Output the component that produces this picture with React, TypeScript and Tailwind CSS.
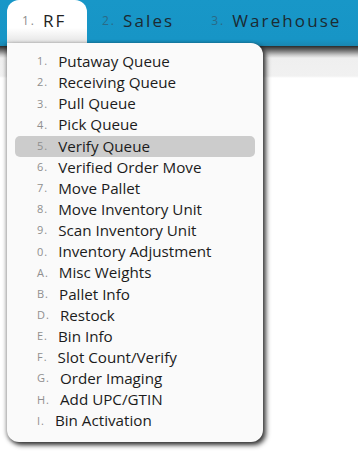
import React from "react";

const items: [string, string][] = [
  ["1.", "Putaway Queue"],
  ["2.", "Receiving Queue"],
  ["3.", "Pull Queue"],
  ["4.", "Pick Queue"],
  ["5.", "Verify Queue"],
  ["6.", "Verified Order Move"],
  ["7.", "Move Pallet"],
  ["8.", "Move Inventory Unit"],
  ["9.", "Scan Inventory Unit"],
  ["0.", "Inventory Adjustment"],
  ["A.", "Misc Weights"],
  ["B.", "Pallet Info"],
  ["D.", "Restock"],
  ["E.", "Bin Info"],
  ["F.", "Slot Count/Verify"],
  ["G.", "Order Imaging"],
  ["H.", "Add UPC/GTIN"],
  ["I.", "Bin Activation"],
];

export default function App() {
  return (
    <div
      className="relative w-[358px] h-[457px] bg-white overflow-hidden"
      style={{ fontFamily: '"Open Sans", "Liberation Sans", Arial, sans-serif' }}
    >
      <div className="flex h-[46px] bg-[linear-gradient(to_bottom,#1897c8_0%,#1795c6_85%,#1a86b0_100%)] pl-[7px]">
        <div className="flex h-[43px] w-[80px] items-center rounded-t-[12px] bg-[linear-gradient(to_bottom,#ffffff_0%,#ffffff_65%,#e4e4e4_100%)] pl-[15px] pb-[2px]">
          <span className="text-[12px] tracking-[2px] text-[#8c8c8c] mr-[7px]">1.</span>
          <span className="text-[17px] tracking-[2.1px] text-[#222]">RF</span>
        </div>
        <div className="flex h-[43px] items-center pl-[15px] pr-[22px] pb-[2px]">
          <span className="text-[12px] tracking-[2px] text-[#2a6a86] mr-[7px]">2.</span>
          <span className="text-[17px] tracking-[2.1px] text-[#1c2a32]">Sales</span>
        </div>
        <div className="flex h-[43px] items-center pl-[15px] pb-[2px]">
          <span className="text-[12px] tracking-[2px] text-[#2a6a86] mr-[7px]">3.</span>
          <span className="text-[17px] tracking-[2.1px] text-[#1c2a32]">Warehouse</span>
        </div>
      </div>
      <div className="h-[32px] bg-[linear-gradient(to_bottom,#2a2a2a_0px,#6a6a6a_4px,#c8c8c8_9px,#efefef_12px,#f1f1f1_30px,#ffffff_32px)]" />

      <div className="absolute left-[7px] top-[43px] w-[256px] h-[399px] rounded-b-[12px] rounded-tr-[12px] bg-[#fafafa] shadow-[3px_3px_5px_rgba(0,0,0,0.75),-1px_1px_4px_rgba(0,0,0,0.35)] pt-[8px]">
        <div className="flex flex-col">
          {items.map(([n, label]) => {
            const active = label === "Verify Queue";
            return (
              <div
                key={label}
                className={
                  "mx-[8px] flex h-[21.15px] items-center rounded-[5px] pl-[22px] " +
                  (active ? "bg-[#cccccc]" : "")
                }
              >
                <span className="text-[11px] tracking-[1px] text-[#8f8f8f] mr-[10px]">{n}</span>
                <span className="text-[15.2px] leading-[21px] text-[#1c1c1c]">{label}</span>
              </div>
            );
          })}
        </div>
      </div>
    </div>
  );
}
